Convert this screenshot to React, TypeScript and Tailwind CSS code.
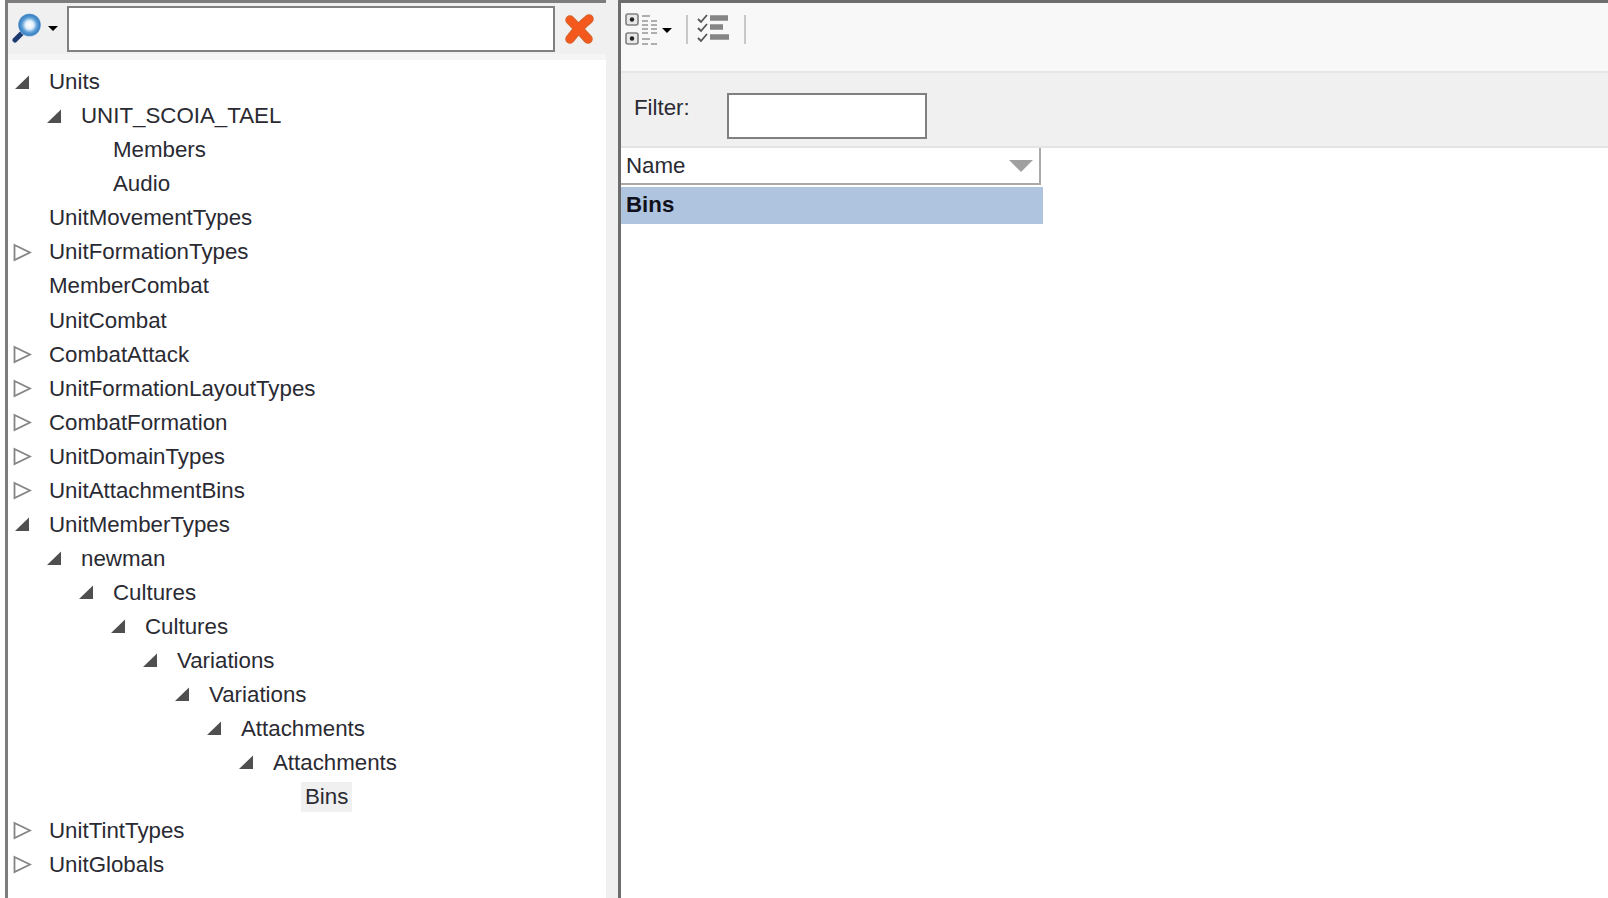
const TREE: { label: string; depth: number; state?: "open" | "closed"; selected?: boolean }[] = [
  { label: "Units", depth: 0, state: "open" },
  { label: "UNIT_SCOIA_TAEL", depth: 1, state: "open" },
  { label: "Members", depth: 2 },
  { label: "Audio", depth: 2 },
  { label: "UnitMovementTypes", depth: 0 },
  { label: "UnitFormationTypes", depth: 0, state: "closed" },
  { label: "MemberCombat", depth: 0 },
  { label: "UnitCombat", depth: 0 },
  { label: "CombatAttack", depth: 0, state: "closed" },
  { label: "UnitFormationLayoutTypes", depth: 0, state: "closed" },
  { label: "CombatFormation", depth: 0, state: "closed" },
  { label: "UnitDomainTypes", depth: 0, state: "closed" },
  { label: "UnitAttachmentBins", depth: 0, state: "closed" },
  { label: "UnitMemberTypes", depth: 0, state: "open" },
  { label: "newman", depth: 1, state: "open" },
  { label: "Cultures", depth: 2, state: "open" },
  { label: "Cultures", depth: 3, state: "open" },
  { label: "Variations", depth: 4, state: "open" },
  { label: "Variations", depth: 5, state: "open" },
  { label: "Attachments", depth: 6, state: "open" },
  { label: "Attachments", depth: 7, state: "open" },
  { label: "Bins", depth: 8, selected: true },
  { label: "UnitTintTypes", depth: 0, state: "closed" },
  { label: "UnitGlobals", depth: 0, state: "closed" },
];

function Arrow({ state }: { state?: "open" | "closed" }) {
  if (!state) return <span className="w-[19px] shrink-0" />;
  return (
    <svg width="19" height="19" viewBox="0 0 19 19" className="shrink-0">
      {state === "open" ? (
        <path d="M16 2.5 L16 16 L2 16 Z" fill="#4f4f4f" />
      ) : (
        <path d="M1.5 2 L17 9.5 L1.5 17 Z" fill="#fff" stroke="#858585" strokeWidth="1.8" />
      )}
    </svg>
  );
}

function SearchIcon() {
  return (
    <svg width="32" height="32" viewBox="0 0 32 32" className="blur-[0.5px]">
      <defs>
        <radialGradient id="lens">
          <stop offset="0%" stopColor="#ffffff" />
          <stop offset="35%" stopColor="#e4f0fa" />
          <stop offset="65%" stopColor="#5c9fd8" />
          <stop offset="90%" stopColor="#3a7fc0" />
          <stop offset="100%" stopColor="#9cc3e6" />
        </radialGradient>
      </defs>
      <path d="M4 27 L13 18" stroke="#1d3a70" strokeWidth="5" strokeLinecap="round" />
      <circle cx="18.5" cy="12" r="11.5" fill="url(#lens)" />
    </svg>
  );
}

function CloseIcon() {
  return (
    <svg width="32" height="32" viewBox="0 0 32 32" className="blur-[0.4px]">
      <path d="M7 7 Q15 15 25 26 M26 6 Q16 14 7 26" fill="none" stroke="#d8632b" strokeWidth="9.5" strokeLinecap="round" />
      <path d="M7 7 Q15 15 25 26 M26 6 Q16 14 7 26" fill="none" stroke="#f5581d" strokeWidth="7" strokeLinecap="round" />
    </svg>
  );
}

function TreeViewIcon() {
  return (
    <svg width="34" height="34" viewBox="0 0 34 34" className="blur-[0.3px]">
      <rect x="1" y="1" width="12" height="11" rx="2" fill="#e8e8e8" stroke="#808080" strokeWidth="1.6" />
      <rect x="1" y="20" width="12" height="11" rx="2" fill="#e8e8e8" stroke="#808080" strokeWidth="1.6" />
      <circle cx="7" cy="6.5" r="2.2" fill="#222" />
      <circle cx="7" cy="25.5" r="2.2" fill="#222" />
      <path
        d="M17 3h8M17 8h6M26 8h6M17 12h6M26 12h6M17 16h6M26 16h6M17 20h6M26 20h6M17 26h8M17 31h6M26 31h6"
        stroke="#959595"
        strokeWidth="1.6"
      />
    </svg>
  );
}

function ChecklistIcon() {
  return (
    <svg width="34" height="32" viewBox="0 0 34 32" className="blur-[0.3px]">
      <path d="M1 6l3 3 6-7M1 15l3 3 6-7M1 25l3 3 6-7" fill="none" stroke="#555" strokeWidth="1.8" />
      <path d="M13 5h18M13 14h13M13 24h19" stroke="#858585" strokeWidth="5.5" />
    </svg>
  );
}

export default function App() {
  return (
    <div className="flex h-[898px] w-[1608px] overflow-hidden bg-white text-[22.3px] text-[#2a2a33] font-['Liberation_Sans',sans-serif]">
      <div className="w-[5px] shrink-0 bg-white" />
      <div className="flex w-[601px] shrink-0 flex-col border-l-[3px] border-t-[3px] border-[#7d7d7d]">
        <div className="flex h-[51px] items-center bg-[#f0f0f0]">
          <div className="ml-[3px] flex w-[56px] items-center">
            <SearchIcon />
            <span className="ml-[5px] h-0 w-0 border-x-[5px] border-t-[5px] border-x-transparent border-t-black" />
          </div>
          <div className="h-[46px] w-[488px] border-2 border-[#808080] bg-white" />
          <div className="ml-[8px]">
            <CloseIcon />
          </div>
        </div>
        <div className="h-[6px] bg-[#f5f5f5]" />
        <div className="flex flex-col pt-[5px]">
          {TREE.map((row, i) => (
            <div key={i} className="flex h-[34.04px] items-center" style={{ paddingLeft: 5 + row.depth * 32 }}>
              <Arrow state={row.state} />
              <span className={row.selected ? "ml-[13px] bg-[#f0f0f0] px-[4px] leading-[30px]" : "ml-[17px] whitespace-nowrap"}>
                {row.label}
              </span>
            </div>
          ))}
        </div>
      </div>
      <div className="w-[12px] shrink-0 bg-[#f0f0f0]" />
      <div className="flex min-w-0 flex-1 flex-col border-l-[3px] border-t-[3px] border-[#6d6d6d]">
        <div className="flex h-[70px] items-start border-b-2 border-[#e6e6e6] bg-[#f8f8f8] pt-[10px] pl-[4px]">
          <div className="flex items-center">
            <TreeViewIcon />
            <span className="ml-[3px] h-0 w-0 border-x-[5px] border-t-[5px] border-x-transparent border-t-black" />
          </div>
          <div className="mt-[2px] ml-[14px] h-[29px] w-[2px] bg-[#c8c8c8]" />
          <div className="ml-[9px]">
            <ChecklistIcon />
          </div>
          <div className="mt-[2px] ml-[13px] h-[29px] w-[2px] bg-[#c8c8c8]" />
        </div>
        <div className="flex h-[75px] items-start border-b-2 border-[#e4e4e4] bg-[#f0f0f0] pl-[13px]">
          <span className="mt-[18px] w-[93px]">Filter:</span>
          <div className="mt-[20px] h-[46px] w-[200px] border-2 border-[#808080] bg-white" />
        </div>
        <div className="flex h-[37px] w-[420px] items-center justify-between border-b-2 border-r-2 border-[#a9a9a9] bg-white pl-[5px] pr-[6px]">
          <span>Name</span>
          <span className="h-0 w-0 border-x-[12px] border-t-[12px] border-x-transparent border-t-[#a0a0a0]" />
        </div>
        <div className="mt-[2px] flex h-[37px] w-[422px] items-center bg-[#afc5df] pb-[1px] pl-[5px] font-bold text-[#10101a]">
          Bins
        </div>
      </div>
    </div>
  );
}
